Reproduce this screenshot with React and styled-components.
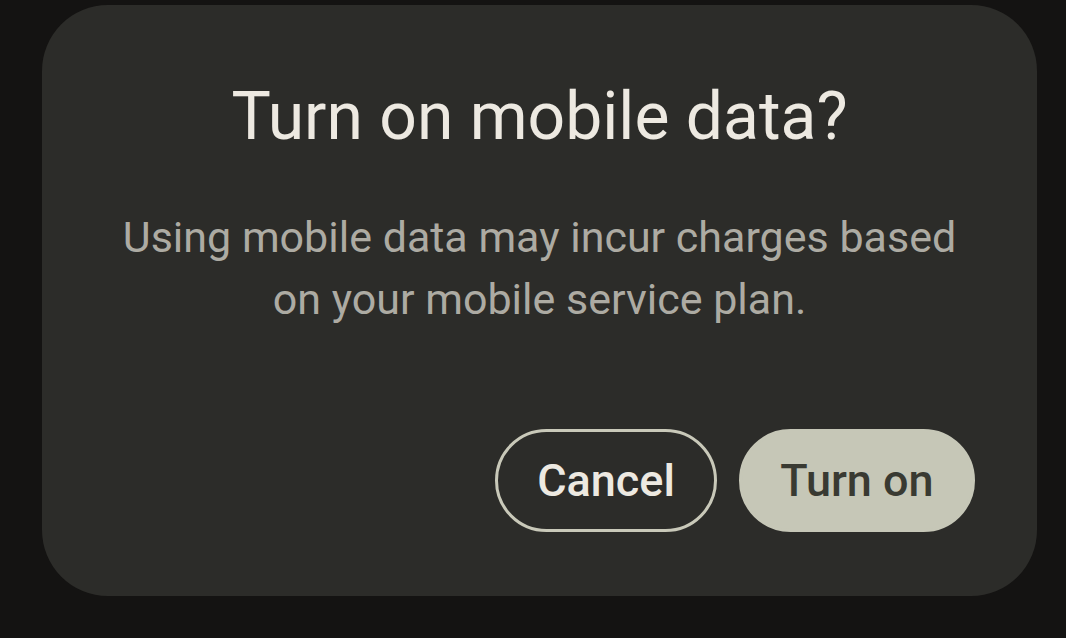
import React from 'react';
import styled, { createGlobalStyle } from 'styled-components';

const GlobalStyle = createGlobalStyle`
  html, body {
    margin: 0;
    padding: 0;
    background: #141312;
  }
  body {
    font-family: 'Roboto', 'Noto Sans', sans-serif;
  }
`;

const Screen = styled.div`
  width: 1066px;
  height: 638px;
  background: #141312;
  display: flex;
  align-items: flex-start;
  padding: 5px 29px 0 42px;
  box-sizing: border-box;
  overflow: hidden;
`;

const Dialog = styled.div`
  width: 995px;
  height: 591px;
  background: #2c2c29;
  border-radius: 66px;
  display: flex;
  flex-direction: column;
  align-items: center;
  box-sizing: border-box;
  padding: 73px 62px 0 62px;
`;

const Title = styled.h2`
  margin: 0;
  font-size: 66px;
  line-height: 78px;
  font-weight: 400;
  color: #ede9e1;
  text-align: center;
`;

const Body = styled.p`
  margin: 50px 0 0;
  font-size: 43px;
  line-height: 62px;
  font-weight: 400;
  color: #adaba3;
  text-align: center;
  white-space: nowrap;
`;

const Actions = styled.div`
  align-self: stretch;
  display: flex;
  justify-content: flex-end;
  gap: 22px;
  margin-top: 99px;
`;

const Button = styled.button`
  height: 103px;
  box-sizing: border-box;
  border-radius: 52px;
  font-family: inherit;
  font-size: 45px;
  font-weight: 500;
  padding: 0;
  cursor: pointer;
  border: 3px solid ${p => (p.filled ? '#c6c7b7' : '#c9c9b9')};
  background: ${p => (p.filled ? '#c6c7b7' : 'transparent')};
  color: ${p => (p.filled ? '#393a32' : '#ede9e1')};
  width: ${p => p.w}px;
`;

const App = () => {
  return (
    <>
      <GlobalStyle />
      <Screen>
        <Dialog>
          <Title>Turn on mobile data?</Title>
          <Body>
            Using mobile data may incur charges based
            <br />
            on your mobile service plan.
          </Body>
          <Actions>
            <Button w={222}>Cancel</Button>
            <Button filled w={236}>Turn on</Button>
          </Actions>
        </Dialog>
      </Screen>
    </>
  );
};

export default App;
